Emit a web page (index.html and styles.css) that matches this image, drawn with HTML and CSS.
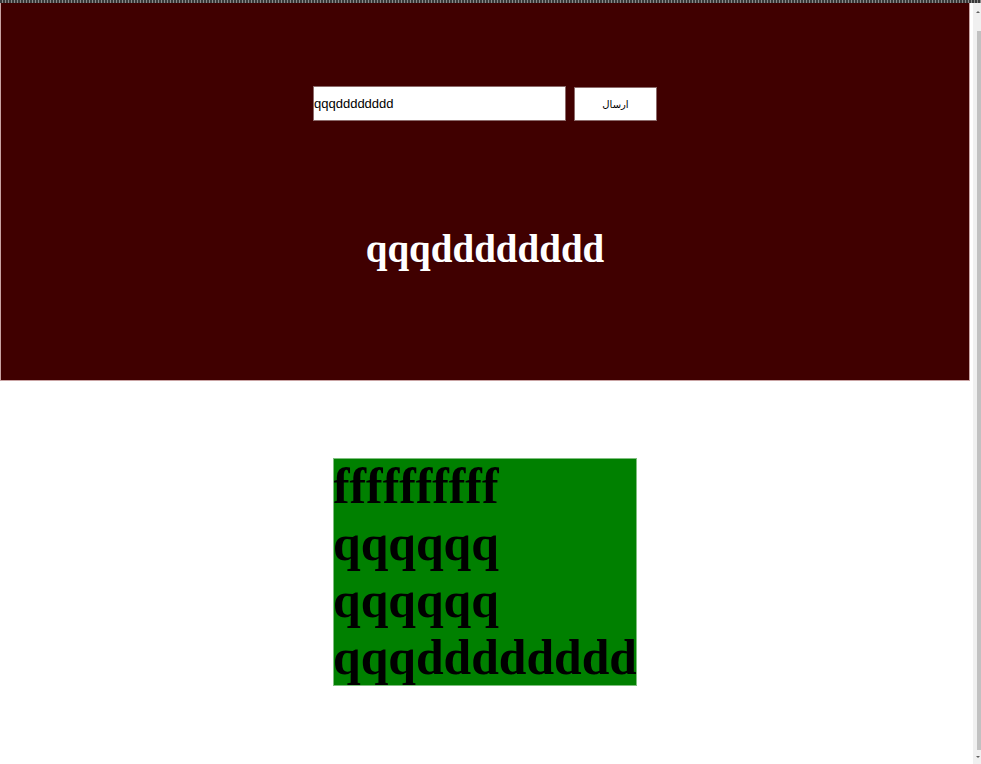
FILE: index.html
```html
<!DOCTYPE html>
<html lang="en">
<head>
<meta charset="utf-8">
<title>Page</title>
<link rel="stylesheet" href="styles.css">
</head>
<body>
<div class="topstrip"></div>
<div class="page">
  <header class="hero">
    <form class="send-form">
      <input class="text-input" type="text" value="qqqdddddddd">
      <button class="send-btn" type="button">ارسال</button>
    </form>
    <h1 class="hero-title">qqqdddddddd</h1>
  </header>
  <main class="content">
    <div class="green-box">
      <div class="line">ffffffffff</div>
      <div class="line">qqqqqq</div>
      <div class="line">qqqqqq</div>
      <div class="line">qqqdddddddd</div>
    </div>
  </main>
</div>
<div class="scrollbar">
  <span class="arrow arrow-up"></span>
  <div class="thumb"></div>
  <span class="arrow arrow-down"></span>
</div>
</body>
</html>
```
FILE: styles.css
```css
html, body {
  margin: 0;
  padding: 0;
  background: #ffffff;
  overflow: hidden;
  height: 100%;
}

body {
  font-family: "Liberation Serif", "Times New Roman", serif;
}

.topstrip {
  height: 3px;
  width: 100%;
  background: repeating-linear-gradient(90deg, #3b3b3b 0, #3b3b3b 2px, #8a8a8a 2px, #8a8a8a 3px);
}

.page {
  width: 970px;
}

.hero {
  box-sizing: border-box;
  width: 970px;
  height: 378px;
  background: #400000;
  border: 1px solid #c9a3a3;
  border-top: none;
  padding-top: 83px;
  display: flex;
  flex-direction: column;
  align-items: center;
}

.send-form {
  display: flex;
  align-items: flex-start;
  gap: 8px;
  margin: 0;
}

.text-input {
  box-sizing: border-box;
  width: 253px;
  height: 35px;
  margin: 0;
  padding: 0;
  border: 1px solid #8c6b6b;
  background: #ffffff;
  color: #000000;
  font-family: "Liberation Sans", Arial, sans-serif;
  font-size: 13px;
  outline: none;
}

.send-btn {
  box-sizing: border-box;
  width: 83px;
  height: 34px;
  margin: 1px 0 0 0;
  padding: 0;
  border: 1px solid #8c6b6b;
  background: #ffffff;
  color: #000000;
  font-family: "DejaVu Sans", sans-serif;
  font-size: 10px;
}

.hero-title {
  margin: 105px 0 0 0;
  color: #ffffff;
  font-family: "Liberation Serif", "Times New Roman", serif;
  font-weight: bold;
  font-size: 39px;
  line-height: normal;
}

.content {
  display: flex;
  justify-content: center;
  padding-top: 77px;
}

.green-box {
  background: #008000;
  color: #000000;
  font-family: "Liberation Serif", "Times New Roman", serif;
  font-weight: bold;
  font-size: 49.7px;
  line-height: 57px;
  outline: 1px solid #7fbf7f;
  outline-offset: -1px;
}

.line {
  white-space: nowrap;
}

.scrollbar {
  position: fixed;
  top: 3px;
  right: 0;
  width: 8px;
  bottom: 0;
  background: #f0f0f0;
  border-left: 3px solid #ffffff;
}

.thumb {
  position: absolute;
  top: 28px;
  bottom: 14px;
  right: 0;
  width: 4px;
  background: #c1c1c1;
}

.arrow {
  position: absolute;
  right: 1px;
  width: 0;
  height: 0;
  border-left: 2px solid transparent;
  border-right: 2px solid transparent;
}

.arrow-up {
  top: 8px;
  border-bottom: 2px solid #606060;
}

.arrow-down {
  bottom: 6px;
  border-top: 2px solid #606060;
}
```
